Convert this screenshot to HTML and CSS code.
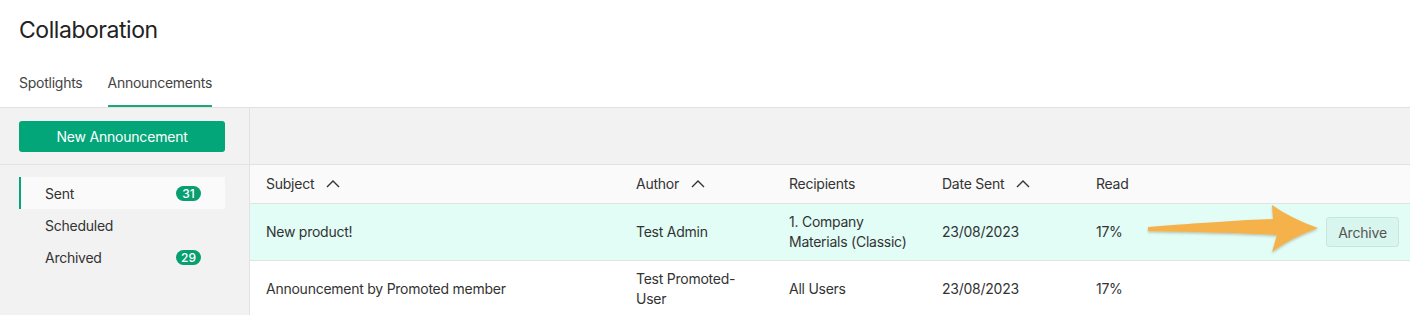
FILE: index.html
```html
<!DOCTYPE html>
<html>
<head>
<meta charset="utf-8">
<link rel="stylesheet" href="styles.css">
</head>
<body>
<header class="top">
  <h1 class="title">Collaboration</h1>
  <nav class="tabs">
    <span class="tab">Spotlights</span>
    <span class="tab active">Announcements</span>
  </nav>
</header>
<div class="layout">
  <aside class="sidebar">
    <div class="side-top">
      <button class="btn-primary">New Announcement</button>
    </div>
    <ul class="side-nav">
      <li class="side-item selected"><span>Sent</span><span class="badge">31</span></li>
      <li class="side-item"><span>Scheduled</span></li>
      <li class="side-item"><span>Archived</span><span class="badge">29</span></li>
    </ul>
  </aside>
  <main class="main">
    <div class="main-top"></div>
    <div class="table">
      <div class="row head">
        <div class="cell">Subject <svg class="chev" viewBox="0 0 14 8"><path d="M1 7 L7 1 L13 7"/></svg></div>
        <div class="cell">Author <svg class="chev" viewBox="0 0 14 8"><path d="M1 7 L7 1 L13 7"/></svg></div>
        <div class="cell">Recipients</div>
        <div class="cell">Date Sent <svg class="chev" viewBox="0 0 14 8"><path d="M1 7 L7 1 L13 7"/></svg></div>
        <div class="cell">Read</div>
        <div class="cell act"></div>
      </div>
      <div class="row hl">
        <div class="cell">New product!</div>
        <div class="cell">Test Admin</div>
        <div class="cell">1. Company Materials (Classic)</div>
        <div class="cell">23/08/2023</div>
        <div class="cell">17%</div>
        <div class="cell act"><button class="btn-archive">Archive</button></div>
        <svg class="arrow" viewBox="0 0 185 60" width="185" height="60">
          <defs>
            <filter id="sh" x="-10%" y="-20%" width="120%" height="150%">
              <feDropShadow dx="0" dy="1.5" stdDeviation="1.2" flood-color="#6a5a30" flood-opacity="0.35"/>
            </filter>
          </defs>
          <path filter="url(#sh)" fill="#f5b24c" d="M8 27 C60 23 100 20 133 19 L132 5 Q150 18 178 28 Q150 38 132 52 L137 35 C100 33 60 32 8 31 Z"/>
        </svg>
      </div>
      <div class="row">
        <div class="cell">Announcement by Promoted member</div>
        <div class="cell">Test Promoted-User</div>
        <div class="cell">All Users</div>
        <div class="cell">23/08/2023</div>
        <div class="cell">17%</div>
        <div class="cell act"></div>
      </div>
    </div>
  </main>
</div>
</body>
</html>
```
FILE: styles.css
```css
* { box-sizing: border-box; }
html, body { margin: 0; padding: 0; }
body {
  font-family: Inter, "Liberation Sans", sans-serif;
  color: #333;
  background: #fff;
  width: 1410px;
  height: 315px;
  overflow: hidden;
  letter-spacing: -0.25px;
}
.top {
  border-bottom: 1px solid #e0e0e0;
}
.title {
  margin: 0;
  padding: 15px 0 0 19px;
  height: 64px;
  font-size: 23px;
  font-weight: 400;
  line-height: 30px;
  color: #222;
  letter-spacing: -0.45px;
}
.tabs {
  display: flex;
  gap: 25px;
  padding-left: 19px;
  height: 43px;
}
.tab {
  font-size: 14px;
  line-height: 20px;
  color: #444;
  padding-top: 9px;
  border-bottom: 2px solid transparent;
}
.tab.active {
  border-bottom-color: #1ba67c;
}
.layout {
  display: flex;
  height: 208px;
}
.sidebar {
  width: 250px;
  flex: none;
  background: #f2f2f2;
  border-right: 1px solid #e2e2e2;
}
.side-top {
  height: 57px;
  padding: 13px 24px 0 19px;
  border-bottom: 1px solid #e2e2e2;
}
.btn-primary {
  display: block;
  width: 206px;
  height: 31px;
  border: 0;
  border-radius: 3px;
  background: #03a679;
  color: #fff;
  font-family: inherit;
  font-size: 14px;
  letter-spacing: -0.2px;
  padding: 0;
}
.side-nav {
  list-style: none;
  margin: 0;
  padding: 12px 24px 0 19px;
}
.side-item {
  display: flex;
  align-items: center;
  justify-content: space-between;
  height: 32px;
  padding: 0 24px 0 24px;
  font-size: 14px;
  color: #333;
  border-left: 2px solid transparent;
}
.side-item.selected {
  background: #fafafa;
  border-left-color: #03a679;
}
.badge {
  width: 25px;
  height: 15px;
  border-radius: 8px;
  background: #079e70;
  color: #fff;
  font-size: 12px;
  font-weight: 500;
  line-height: 15px;
  text-align: center;
  letter-spacing: 0;
}
.main {
  flex: 1;
  min-width: 0;
}
.main-top {
  height: 57px;
  background: #f2f2f2;
  border-bottom: 1px solid #e2e2e2;
}
.row {
  position: relative;
  display: grid;
  grid-template-columns: 370px 153px 153px 154px 1fr auto;
  align-items: center;
  border-bottom: 1px solid #e2e2e2;
  min-height: 57px;
  font-size: 14px;
  line-height: 20px;
  color: #333;
}
.row.head {
  min-height: 39px;
  background: #fafafa;
}
.row.hl {
  background: #e1fdf6;
}
.cell {
  padding: 0 16px;
  display: flex;
  align-items: center;
}
.cell.act {
  padding: 0 11px 0 0;
}
.chev {
  width: 14px;
  height: 8px;
  margin-left: 12px;
  fill: none;
  stroke: #333;
  stroke-width: 1.4;
}
.btn-archive {
  width: 73px;
  height: 30px;
  border: 1px solid #c8e6de;
  border-radius: 3px;
  background: #d8f5ee;
  color: #555;
  font-family: inherit;
  font-size: 14px;
  letter-spacing: -0.2px;
  padding: 0;
}
.arrow {
  position: absolute;
  left: 890px;
  top: -4px;
}
```
